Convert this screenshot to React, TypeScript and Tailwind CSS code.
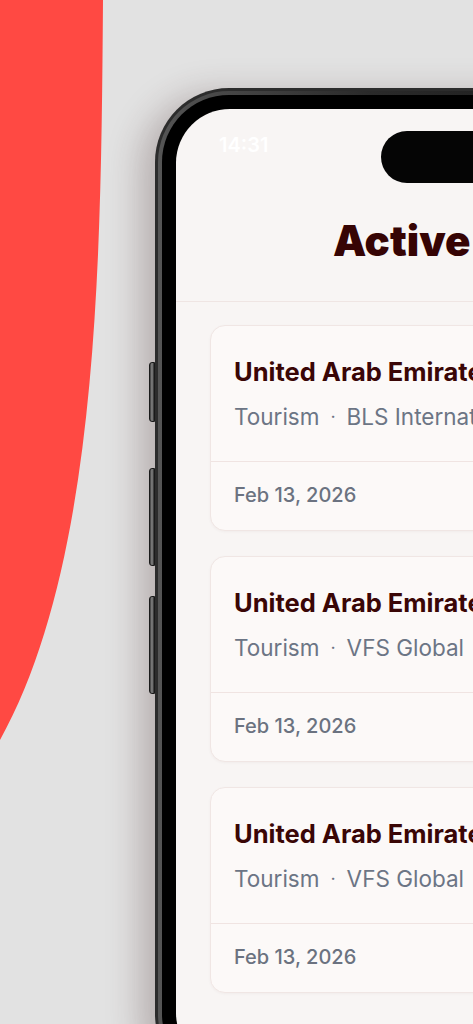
import React from "react";

type Appointment = {
  country: string;
  category: string;
  provider: string;
  date: string;
};

const appointments: Appointment[] = [
  { country: "United Arab Emirates", category: "Tourism", provider: "BLS International", date: "Feb 13, 2026" },
  { country: "United Arab Emirates", category: "Tourism", provider: "VFS Global", date: "Feb 13, 2026" },
  { country: "United Arab Emirates", category: "Tourism", provider: "VFS Global", date: "Feb 13, 2026" },
];

const font = { fontFamily: "Inter, 'Noto Sans', sans-serif" };

function AppointmentCard({ item }: { item: Appointment }) {
  return (
    <div className="w-[420px] shrink-0 rounded-[15px] border border-[#f0e6e4] bg-[#fcf9f8] shadow-[0_1px_3px_rgba(80,30,30,0.04)]">
      <div className="pl-[23px] pt-[31px] pb-[30px]">
        <div className="whitespace-nowrap text-[25.5px] font-bold leading-[30px] text-[#3a0606]">
          {item.country}
        </div>
        <div className="mt-[16px] flex items-center gap-[11px] whitespace-nowrap text-[22.5px] leading-[28px] text-[#6c7585]">
          <span>{item.category}</span>
          <span className="text-[18px]">·</span>
          <span>{item.provider}</span>
        </div>
      </div>
      <div className="h-px bg-[#f0e4e2]" />
      <div className="pl-[23px] pt-[21px] pb-[23px] text-[20px] font-medium leading-[24px] text-[#6b7280]">
        {item.date}
      </div>
    </div>
  );
}

function PhoneButton({ top, height }: { top: string; height: string }) {
  return (
    <div
      className={`absolute -left-[6px] w-[6px] rounded-l-[3px] border border-[#1a1a1a] bg-gradient-to-r from-[#3a3a3a] via-[#8a8a8a] to-[#2a2a2a] ${top} ${height}`}
    />
  );
}

export default function App() {
  return (
    <div className="relative h-[1024px] w-[473px] overflow-hidden bg-[#e2e2e2]" style={font}>
      <svg className="absolute left-0 top-0" width="120" height="760" viewBox="0 0 120 760">
        <path d="M0 0 L103 0 C101 250 100 560 0 740 Z" fill="#ff4943" />
      </svg>

      <div className="relative ml-[155px] mt-[88px] h-[1000px] w-[430px] rounded-[74px] bg-[#2c2c2c] p-[3px] shadow-[-14px_6px_34px_rgba(70,40,40,0.28)]">
        <PhoneButton top="top-[274px]" height="h-[60px]" />
        <PhoneButton top="top-[380px]" height="h-[98px]" />
        <PhoneButton top="top-[508px]" height="h-[98px]" />
        <div className="h-full w-full rounded-[71px] bg-gradient-to-r from-[#555] via-[#2a2a2a] to-[#1c1c1c] p-[4px]">
          <div className="h-full w-full rounded-[67px] bg-black p-[14px]">
            <div className="h-full w-full overflow-hidden rounded-[54px] bg-[#f8f5f4]">
              <div className="flex items-start pl-[43px] pt-[22px]">
                <div className="mt-[2px] w-[162px] text-[20px] font-semibold leading-[24px] text-white">
                  14:31
                </div>
                <div className="h-[52px] w-[170px] shrink-0 rounded-full bg-[#050505]" />
              </div>

              <div className="border-b border-[#efe5e3] pb-[35px] pt-[33px]">
                <div className="whitespace-nowrap pl-[157px] text-[42px] font-black leading-[50px] text-[#360404]">
                  Active
                </div>
              </div>

              <div className="flex flex-col gap-[25px] pl-[34px] pt-[23px]">
                {appointments.map((item, i) => (
                  <AppointmentCard key={i} item={item} />
                ))}
              </div>
            </div>
          </div>
        </div>
      </div>
    </div>
  );
}
